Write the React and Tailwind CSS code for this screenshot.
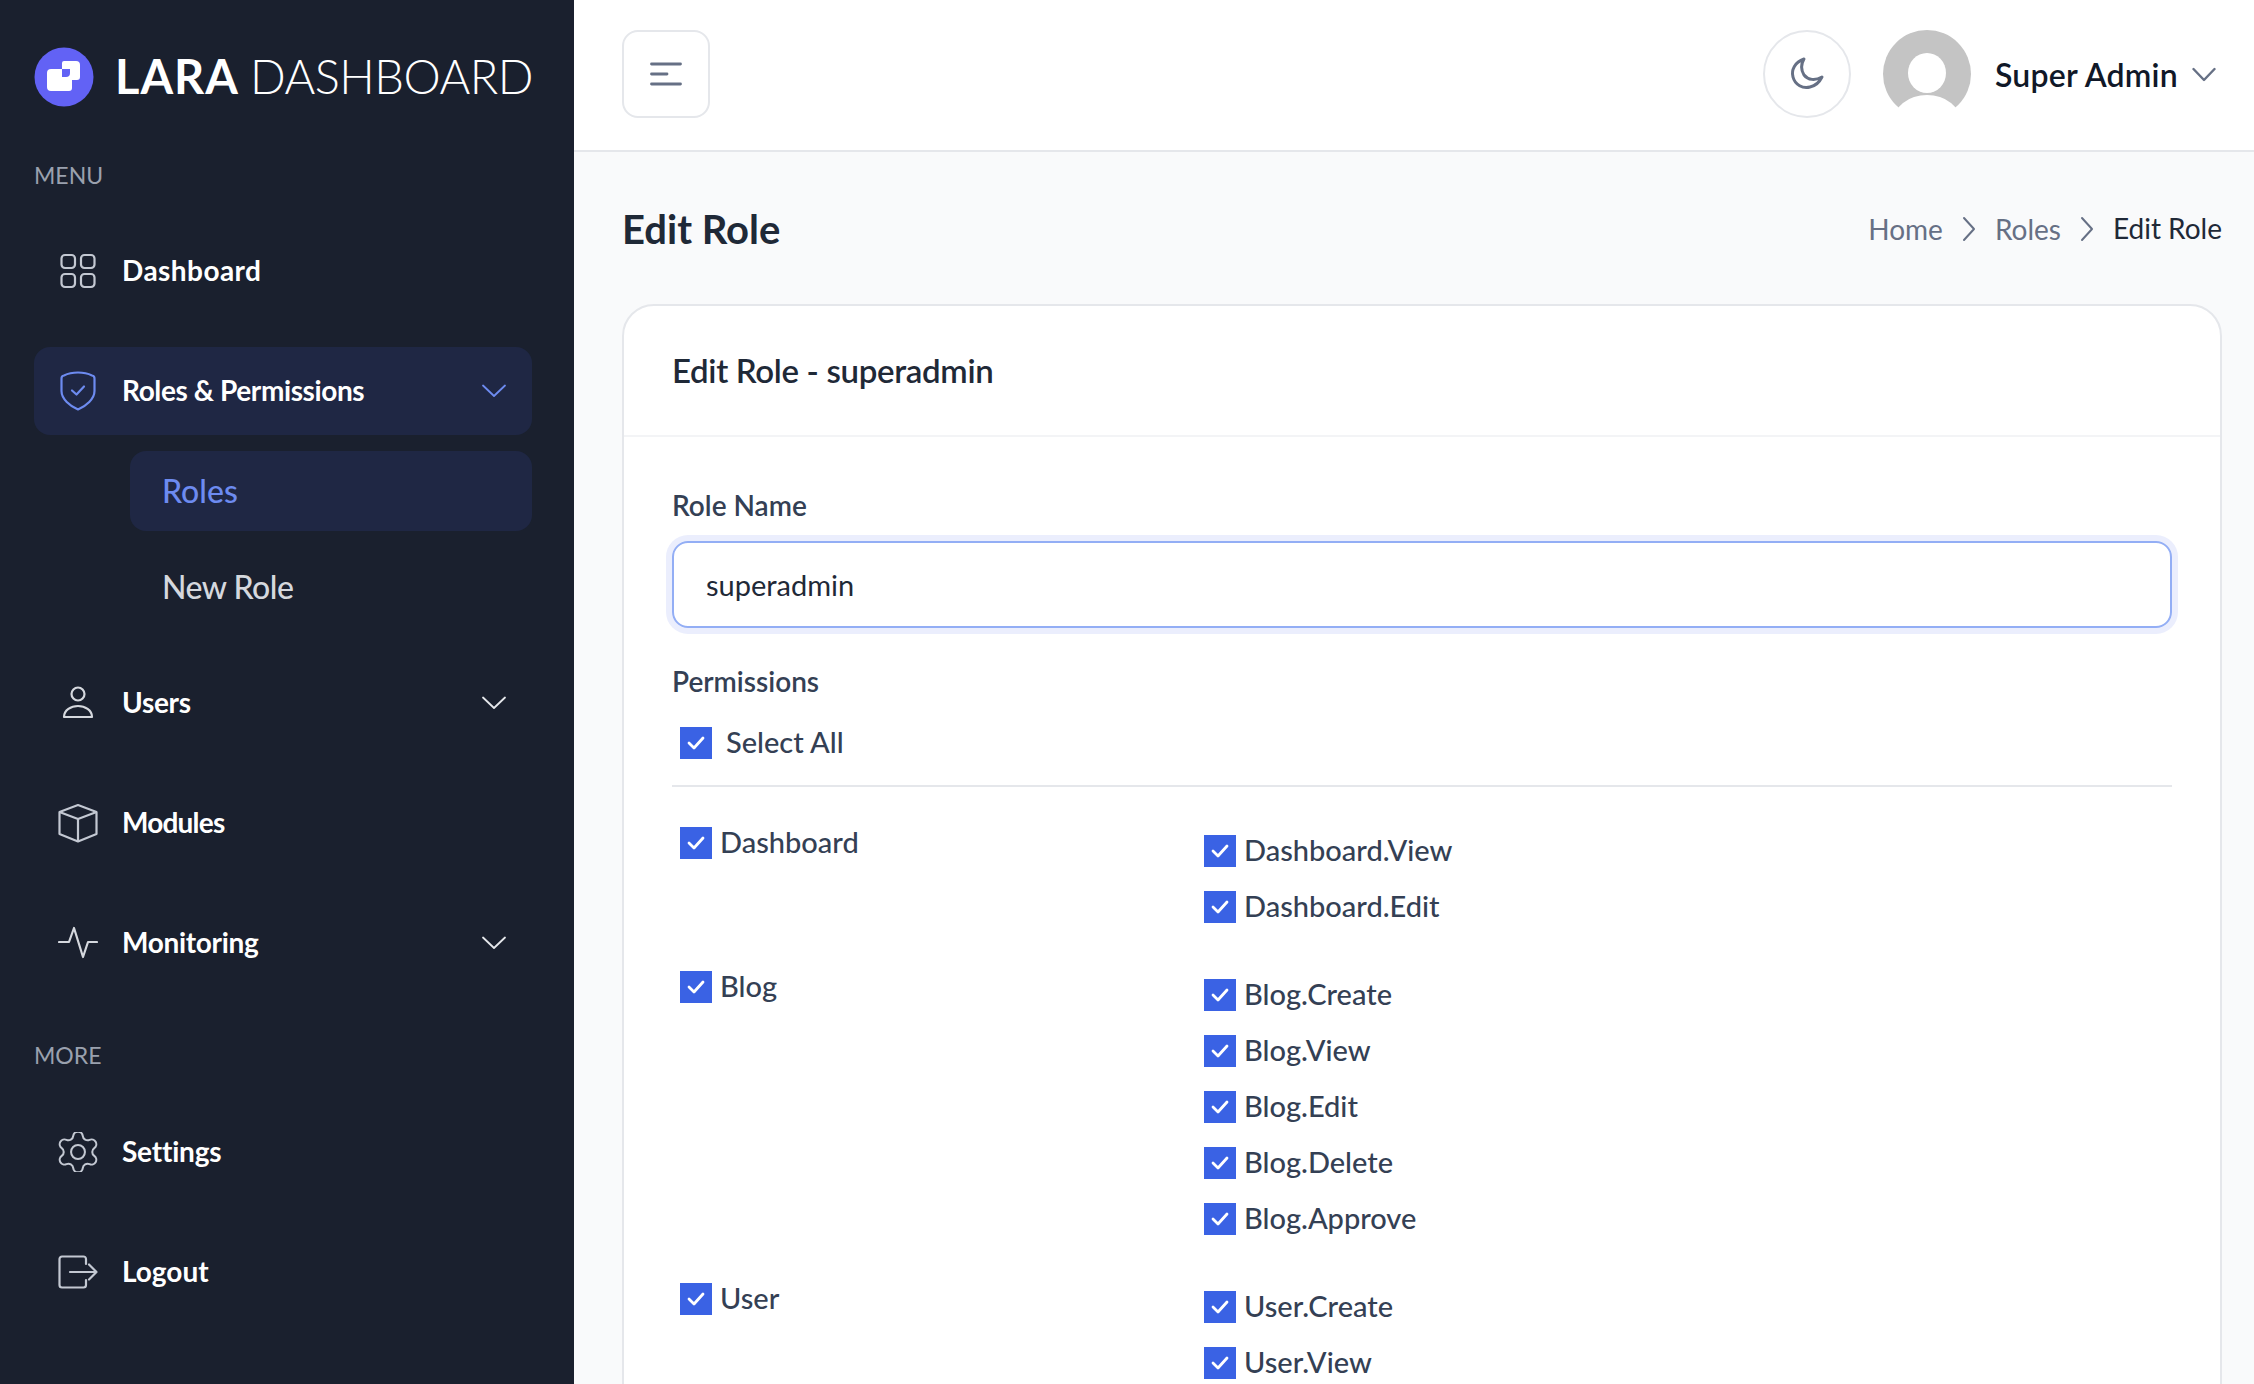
import { useState } from "react";

const font = { fontFamily: "Lato, sans-serif" };

function GridIcon() {
  return (
    <svg width="36" height="36" viewBox="0 0 36 36" fill="none" stroke="#c3c8d2" strokeWidth="2.2">
      <rect x="1.5" y="2" width="13.5" height="13" rx="3.5" />
      <rect x="21" y="2" width="13.5" height="13" rx="3.5" />
      <rect x="1.5" y="21" width="13.5" height="13" rx="3.5" />
      <rect x="21" y="21" width="13.5" height="13" rx="3.5" />
    </svg>
  );
}

function ShieldIcon() {
  return (
    <svg width="36" height="40" viewBox="0 0 36 40" fill="none" stroke="#6d8bf0" strokeWidth="2.2" strokeLinecap="round" strokeLinejoin="round">
      <path d="M18 1.5 C24 1.5 29 3 32 4.5 A3 3 0 0 1 34.5 7.5 V20 C34.5 28 26 35 18 38.5 C10 35 1.5 28 1.5 20 V7.5 A3 3 0 0 1 4 4.5 C7 3 12 1.5 18 1.5 Z" />
      <path d="M12 19.5 L16.5 23.5 L24 15.5" />
    </svg>
  );
}

function UserIcon() {
  return (
    <svg width="36" height="36" viewBox="0 0 36 36" fill="none" stroke="#d5d8de" strokeWidth="2.2" strokeLinejoin="round">
      <circle cx="18" cy="9" r="6.5" />
      <path d="M4 32 C4 25 11 21 18 21 C25 21 32 25 32 32 Z" />
    </svg>
  );
}

function BoxIcon() {
  return (
    <svg width="40" height="40" viewBox="0 0 40 40" fill="none" stroke="#c3c8d2" strokeWidth="2.2" strokeLinejoin="round">
      <path d="M20 2 L38.5 9 V31 L20 38.5 L1.5 31 V9 Z" />
      <path d="M1.5 9 L20 16 L38.5 9 M20 16 V38.5" />
    </svg>
  );
}

function PulseIcon() {
  return (
    <svg width="40" height="34" viewBox="0 0 40 34" fill="none" stroke="#d5d8de" strokeWidth="2.2" strokeLinejoin="round" strokeLinecap="round">
      <path d="M1 16 H11 L16 2 L25 31 L30 16 H39" />
    </svg>
  );
}

function GearIcon() {
  return (
    <svg width="40" height="40" viewBox="2.9 2.2 18.2 19.6" fill="none" stroke="#c3c8d2" strokeWidth="1" strokeLinejoin="round" strokeLinecap="round">
      <circle cx="12" cy="12" r="3.4" />
      <path d="M9.671 4.136a2.34 2.34 0 0 1 4.659 0 2.34 2.34 0 0 0 3.319 1.915 2.34 2.34 0 0 1 2.33 4.033 2.34 2.34 0 0 0 0 3.831 2.34 2.34 0 0 1-2.33 4.033 2.34 2.34 0 0 0-3.319 1.915 2.34 2.34 0 0 1-4.659 0 2.34 2.34 0 0 0-3.32-1.915 2.34 2.34 0 0 1-2.33-4.033 2.34 2.34 0 0 0 0-3.831A2.34 2.34 0 0 1 6.35 6.051a2.34 2.34 0 0 0 3.319-1.915" />
    </svg>
  );
}

function LogoutIcon() {
  return (
    <svg width="40" height="34" viewBox="0 0 40 34" fill="none" stroke="#c3c8d2" strokeWidth="2.2" strokeLinejoin="round" strokeLinecap="round">
      <path d="M28 9 V4 A2.5 2.5 0 0 0 25.5 1.5 H4 A2.5 2.5 0 0 0 1.5 4 V30 A2.5 2.5 0 0 0 4 32.5 H25.5 A2.5 2.5 0 0 0 28 30 V25" />
      <path d="M12 17 H38.5 M31 9.5 L38.5 17 L31 24.5" />
    </svg>
  );
}

function Chevron({ color = "#e5e7eb" }) {
  return (
    <svg width="24" height="14" viewBox="0 0 24 14" fill="none" stroke={color} strokeWidth="1.8" strokeLinecap="round" strokeLinejoin="round">
      <path d="M1 1.5 L12 12 L23 1.5" />
    </svg>
  );
}

function NavItem({ icon, label, active, arrow, track = "" }) {
  return (
    <div className={`flex items-center h-[88px] rounded-[16px] mb-[32px] pl-[23px] pr-[26px] ${active ? "bg-[#1f2744]" : ""}`}>
      <div className="w-[42px] flex justify-center">{icon}</div>
      <span className={`ml-[23px] pb-[2px] flex-1 text-[28px] font-bold text-white ${track}`}>{label}</span>
      {arrow && <Chevron color={active ? "#6d8bf0" : "#e5e7eb"} />}
    </div>
  );
}

function Sidebar() {
  return (
    <aside className="w-[574px] h-full shrink-0 bg-[#1a202e] pl-[34px] pr-[42px]">
      <div className="flex items-center h-[59px] mt-[47px]">
        <svg width="60" height="60" viewBox="0 0 60 60" className="shrink-0">
          <circle cx="30" cy="30" r="29.5" fill="#6262f5" />
          <path d="M30 14 H42 A4 4 0 0 1 46 18 V30 A3 3 0 0 1 43 33 H38 V22 H28 V16 A2 2 0 0 1 30 14 Z" fill="#fff" />
          <path d="M13 26 A4 4 0 0 1 17 22 H38 V41 A3 3 0 0 1 35 44 H17 A4 4 0 0 1 13 40 Z" fill="#fff" />
          <path d="M28 22 H36 V26 A4 4 0 0 1 32 30 H28 Z" fill="#6262f5" />
        </svg>
        <span className="ml-[21px] text-[47px] font-bold text-white tracking-[1px] leading-none whitespace-nowrap">LARA</span>
        <span className="ml-[11px] text-[47px] font-light text-white tracking-[-0.5px] leading-none whitespace-nowrap">DASHBOARD</span>
      </div>
      <div className="mt-[55px] text-[23px] leading-[28px] text-[#9aa1ae]">MENU</div>
      <div className="mt-[38px]">
        <NavItem icon={<GridIcon />} label="Dashboard" track="tracking-[0.45px]" />
        <div className="-mb-[16px]">
          <NavItem icon={<ShieldIcon />} label="Roles & Permissions" active arrow track="tracking-[-0.4px]" />
        </div>
        <div className="ml-[96px] h-[80px] rounded-[16px] bg-[#1f2744] flex items-center pl-[32px] text-[32px] font-medium text-[#6d8bf0]">Roles</div>
        <div className="ml-[96px] mt-[17px] mb-[31px] h-[80px] flex items-center pl-[32px] pb-[2px] text-[32px] font-medium tracking-[-0.5px] text-[#d5d8de]">New Role</div>
        <NavItem icon={<UserIcon />} label="Users" track="tracking-[-0.3px]" arrow />
        <NavItem icon={<BoxIcon />} label="Modules" track="tracking-[-0.8px]" />
        <NavItem icon={<PulseIcon />} label="Monitoring" track="tracking-[-0.3px]" arrow />
      </div>
      <div className="mt-[54px] text-[23px] leading-[28px] text-[#9aa1ae]">MORE</div>
      <div className="mt-[39px]">
        <NavItem icon={<GearIcon />} label="Settings" track="tracking-[-0.2px]" />
        <NavItem icon={<LogoutIcon />} label="Logout" />
      </div>
    </aside>
  );
}

function Header() {
  return (
    <header className="h-[152px] shrink-0 bg-white border-b-2 border-[#e5e7eb] flex items-center pl-[48px] pr-[38px] pb-[2px]">
      <button className="w-[88px] h-[88px] rounded-[16px] border-2 border-[#e5e7eb] flex items-center justify-center">
        <svg width="32" height="24" viewBox="0 0 32 24" fill="none" stroke="#667085" strokeWidth="2.8" strokeLinecap="round">
          <path d="M1.5 2 H30.5 M1.5 12 H17 M1.5 22 H30.5" />
        </svg>
      </button>
      <div className="flex-1" />
      <button className="w-[88px] h-[88px] rounded-full border-2 border-[#e5e7eb] flex items-center justify-center">
        <svg width="36" height="36" viewBox="0 0 36 36" fill="none" stroke="#667085" strokeWidth="3" strokeLinejoin="round">
          <path d="M15 3 C6 6 2 14 4 21 C6 29 14 33 21 31 C26 30 30 27 33 21 C26 25 19 24 15 19 C12 14 12 8 15 3 Z" />
        </svg>
      </button>
      <svg width="88" height="88" viewBox="0 0 88 88" className="ml-[32px] shrink-0">
        <circle cx="44" cy="44" r="44" fill="#c4c4c4" />
        <ellipse cx="44" cy="43" rx="19" ry="20" fill="#fff" />
        <ellipse cx="44" cy="92" rx="34" ry="27" fill="#fff" />
        <rect x="0" y="78" width="88" height="10" fill="#fff" />
      </svg>
      <span className="ml-[24px] pt-[2px] text-[32px] font-semibold tracking-[0.25px] text-[#101828] whitespace-nowrap">Super Admin</span>
      <svg width="24" height="15" viewBox="0 0 24 15" fill="none" stroke="#667085" strokeWidth="2.4" strokeLinecap="round" strokeLinejoin="round" className="ml-[14px]">
        <path d="M1.5 2 L12 13 L22.5 2" />
      </svg>
    </header>
  );
}

function Sep() {
  return (
    <svg width="14" height="26" viewBox="0 0 14 26" fill="none" stroke="#667085" strokeWidth="2" strokeLinecap="round" strokeLinejoin="round" className="mx-[19px]">
      <path d="M2 2 L12 13 L2 24" />
    </svg>
  );
}

function Check({ label, gap = "ml-[8px]" }) {
  const [on, setOn] = useState(true);
  return (
    <label className="flex items-center h-[32px]" onClick={() => setOn(!on)}>
      <span className="w-[32px] h-[32px] bg-[#3a62e4] flex items-center justify-center shrink-0">
        <svg width="18" height="14" viewBox="0 0 18 14" fill="none" stroke="#fff" strokeWidth="2.8" strokeLinecap="round" strokeLinejoin="round">
          <path d="M2 7 L7 12 L16 2" />
        </svg>
      </span>
      <span className={`${gap} pb-[3px] text-[29px] font-medium text-[#344054] leading-none whitespace-nowrap`}>{label}</span>
    </label>
  );
}

const groups = [
  { name: "Dashboard", perms: ["Dashboard.View", "Dashboard.Edit"] },
  { name: "Blog", perms: ["Blog.Create", "Blog.View", "Blog.Edit", "Blog.Delete", "Blog.Approve"] },
  { name: "User", perms: ["User.Create", "User.View"] },
];

function Card() {
  return (
    <section className="bg-white border-2 border-[#e5e7eb] rounded-[32px]">
      <div className="h-[131px] border-b-2 border-[#f3f4f6] flex items-center px-[48px]">
        <h2 className="text-[33px] font-semibold tracking-[-0.33px] text-[#1f2937]">Edit Role - superadmin</h2>
      </div>
      <div className="px-[48px] pt-[48px] pb-[48px]">
        <div className="text-[28px] leading-[40px] font-semibold text-[#344054]">Role Name</div>
        <div className="mt-[16px] h-[87px] rounded-[16px] border-2 border-[#93aef5] ring-[6px] ring-[#ebeefd] flex items-center pl-[32px] text-[29px] text-[#1f2937]">superadmin</div>
        <div className="mt-[33px] text-[28px] leading-[40px] font-semibold text-[#344054]">Permissions</div>
        <div className="mt-[26px] pl-[8px]">
          <Check label="Select All" gap="ml-[14px]" />
        </div>
        <hr className="mt-[26px] border-t-2 border-[#e5e7eb]" />
        <div className="mt-[40px]">
          {groups.map((g) => (
            <div key={g.name} className="flex mb-[48px]">
              <div className="w-[532px] pl-[8px] shrink-0">
                <Check label={g.name} />
              </div>
              <div className="pt-[8px] flex flex-col gap-[24px]">
                {g.perms.map((p) => (
                  <Check key={p} label={p} />
                ))}
              </div>
            </div>
          ))}
        </div>
      </div>
    </section>
  );
}

export default function App() {
  return (
    <div className="flex w-full h-screen overflow-hidden" style={font}>
      <Sidebar />
      <div className="flex-1 flex flex-col bg-[#f9fafb] min-w-0">
        <Header />
        <main className="flex-1 overflow-hidden pl-[48px] pr-[32px]">
          <div className="flex items-center justify-between h-[48px] mt-[53px] mb-[51px]">
            <h1 className="text-[40px] font-bold text-[#1f2937]">Edit Role</h1>
            <nav className="flex items-center text-[28px]">
              <span className="text-[#667085]">Home</span>
              <Sep />
              <span className="text-[#667085]">Roles</span>
              <Sep />
              <span className="text-[#1f2937] pb-[2px]">Edit Role</span>
            </nav>
          </div>
          <Card />
        </main>
      </div>
    </div>
  );
}
